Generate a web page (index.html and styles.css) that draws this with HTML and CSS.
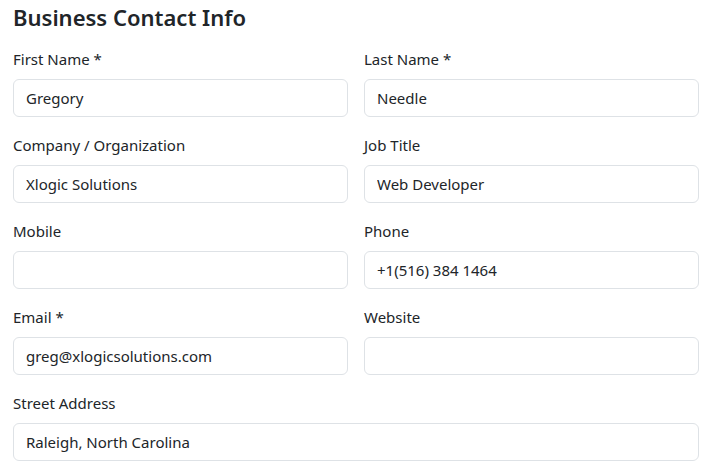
FILE: index.html
```html
<!DOCTYPE html>
<html lang="en">
<head>
<meta charset="utf-8">
<title>Business Contact Info</title>
<link rel="stylesheet" href="styles.css">
</head>
<body>
<form class="contact">
  <h4 class="title">Business Contact Info</h4>
  <div class="grid">
    <div class="field">
      <label class="label">First Name *</label>
      <input class="input" type="text" value="Gregory">
    </div>
    <div class="field">
      <label class="label">Last Name *</label>
      <input class="input" type="text" value="Needle">
    </div>
    <div class="field">
      <label class="label">Company / Organization</label>
      <input class="input" type="text" value="Xlogic Solutions">
    </div>
    <div class="field">
      <label class="label">Job Title</label>
      <input class="input" type="text" value="Web Developer">
    </div>
    <div class="field">
      <label class="label">Mobile</label>
      <input class="input" type="text" value="">
    </div>
    <div class="field">
      <label class="label">Phone</label>
      <input class="input" type="text" value="+1(516) 384 1464">
    </div>
    <div class="field">
      <label class="label">Email *</label>
      <input class="input" type="text" value="greg@xlogicsolutions.com">
    </div>
    <div class="field">
      <label class="label">Website</label>
      <input class="input" type="text" value="">
    </div>
    <div class="field wide">
      <label class="label">Street Address</label>
      <input class="input" type="text" value="Raleigh, North Carolina">
    </div>
  </div>
</form>
</body>
</html>
```
FILE: styles.css
```css
html, body {
  margin: 0;
  padding: 0;
  background: #ffffff;
}
body {
  font-family: "Segoe UI", "Noto Sans", "Open Sans", sans-serif;
  font-size: 16px;
  line-height: 1.5;
  color: #212529;
}
.contact {
  padding: 3px 9px 0 13px;
}
.title {
  margin: 0 0 15px 0;
  font-size: 22px;
  font-weight: 600;
  line-height: 29px;
  color: #212529;
}
.grid {
  display: grid;
  grid-template-columns: 1fr 1fr;
  column-gap: 16px;
  row-gap: 16px;
}
.field {
  display: flex;
  flex-direction: column;
}
.wide {
  grid-column: 1 / span 2;
}
.label {
  display: block;
  margin-bottom: 8px;
  line-height: 24px;
  font-size: 15px;
}
.input {
  box-sizing: border-box;
  display: block;
  width: 100%;
  height: 38px;
  margin: 0;
  padding: 6px 12px;
  font-family: inherit;
  font-size: 15px;
  line-height: 24px;
  color: #212529;
  background: #ffffff;
  border: 1px solid #dee2e6;
  border-radius: 6px;
  outline: none;
}
```
